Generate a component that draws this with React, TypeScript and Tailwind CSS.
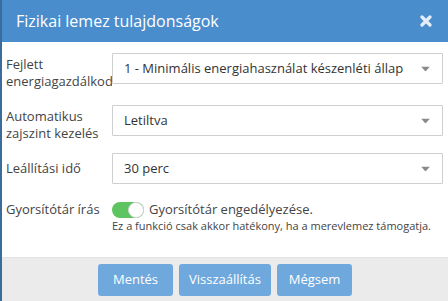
const font = { fontFamily: '"Open Sans", "Noto Sans", sans-serif' };

function Select({ value }: { value: string }) {
  return (
    <div className="relative flex h-[31px] min-w-0 flex-1 items-center rounded-[1px] border border-[#cfcfcf] bg-white">
      <div className="ml-[11px] mr-[39px] min-w-0 flex-1 overflow-hidden whitespace-nowrap text-[13px] text-[#333]">
        {value}
      </div>
      <svg
        className="absolute right-[12px] top-1/2 -translate-y-1/2"
        width="9"
        height="5"
        viewBox="0 0 9 5"
      >
        <path d="M0 0h9L4.5 5z" fill="#8a8a8a" />
      </svg>
    </div>
  );
}

function Row({
  label,
  children,
  className,
}: {
  label: React.ReactNode;
  children: React.ReactNode;
  className?: string;
}) {
  return (
    <div className={"flex " + (className ?? "items-start")}>
      <div className="w-[106px] shrink-0 overflow-hidden whitespace-nowrap pt-[3px] text-[13px] leading-[17px] text-[#444]">
        {label}
      </div>
      {children}
    </div>
  );
}

export default function App() {
  return (
    <div
      className="flex h-[301px] w-[448px] flex-col border-l-2 border-[#3b6c9b] bg-white"
      style={font}
    >
      {/* Header */}
      <div className="flex h-[42px] shrink-0 items-center justify-between bg-[#4a8dcd] pl-[14px] pr-[16px]">
        <span className="text-[16px] text-white">Fizikai lemez tulajdonságok</span>
        <svg width="12" height="12" viewBox="0 0 12 12">
          <path
            d="M2 2l8 8M10 2l-8 8"
            stroke="#e3eef8"
            strokeWidth="3.2"
            strokeLinecap="round"
          />
        </svg>
      </div>

      {/* Body */}
      <div className="flex-1 pl-[4px] pr-[5px] pt-[11px]">
        <Row
          label={
            <>
              Fejlett
              <br />
              energiagazdálkodás
            </>
          }
        >
          <Select value="1 - Minimális energiahasználat készenléti állapot" />
        </Row>
        <Row
          className="mt-[15px] items-start"
          label={
            <>
              Automatikus
              <br />
              zajszint kezelés
            </>
          }
        >
          <Select value="Letiltva" />
        </Row>
        <div className="mt-[11px] flex items-center">
          <div className="w-[106px] shrink-0 text-[13px] leading-[17px] text-[#444]">
            Leállítási idő
          </div>
          <Select value="30 perc" />
        </div>
        <div className="mt-[17px] flex items-start">
          <div className="w-[106px] shrink-0 text-[13px] leading-[17px] text-[#444]">
            Gyorsítótár írás
          </div>
          <div className="flex flex-col">
            <div className="flex items-center">
              <div className="relative h-[16px] w-[32px] rounded-full bg-[#5ec460]">
                <div className="absolute right-0 top-0 h-[16px] w-[16px] rounded-full border border-[#d6d6d6] bg-white" />
              </div>
              <span className="ml-[5px] text-[13px] leading-[17px] text-[#444]">
                Gyorsítótár engedélyezése.
              </span>
            </div>
            <div className="mt-[1px] whitespace-nowrap text-[11px] leading-[14px] text-[#444]">
              Ez a funkció csak akkor hatékony, ha a merevlemez támogatja.
            </div>
          </div>
        </div>
      </div>

      {/* Footer */}
      <div className="flex h-[44px] shrink-0 items-start justify-center gap-[6px] border-t border-[#e2e2e2] bg-[#ebebeb] pt-[6px]">
        <button className="h-[32px] w-[75px] rounded-[3px] bg-[#6fa8dd] text-[13px] text-white">
          Mentés
        </button>
        <button className="h-[32px] w-[92px] rounded-[3px] bg-[#6fa8dd] text-[13px] text-white">
          Visszaállítás
        </button>
        <button className="h-[32px] w-[75px] rounded-[3px] bg-[#6fa8dd] text-[13px] text-white">
          Mégsem
        </button>
      </div>
    </div>
  );
}
